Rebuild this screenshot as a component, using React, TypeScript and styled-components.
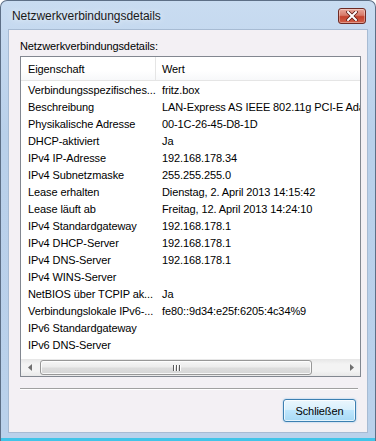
import React from "react";
import styled, { createGlobalStyle } from "styled-components";

const Global = createGlobalStyle`
  html, body { margin: 0; padding: 0; }
  body { width: 376px; height: 441px; overflow: hidden; font-family: "Liberation Sans", Arial, sans-serif; }
`;

const Window = styled.div`
  width: 376px;
  height: 441px;
  box-sizing: border-box;
  display: flex;
  flex-direction: column;
  background: linear-gradient(180deg, #c9dcf1 0%, #b9d0ea 30%, #bad1eb 100%);
  border: 1px solid #5d6f86;
  border-bottom: none;
  border-radius: 7px 7px 0 0;
  overflow: hidden;
`;

const TitleBar = styled.div`
  height: 28px;
  flex: none;
  display: flex;
  align-items: center;
  justify-content: space-between;
  padding: 0 9px 0 11px;
`;

const Title = styled.div`
  font-size: 12px;
  letter-spacing: -0.05px;
  color: #1a1a1a;
  text-shadow: 0 0 6px rgba(255, 255, 255, 0.9);
  margin-top: 2px;
`;

const CloseButton = styled.div`
  width: 28px;
  height: 16px;
  margin-top: 2px;
  box-sizing: border-box;
  border: 1px solid #6e2a24;
  border-radius: 3px;
  background: linear-gradient(180deg, #e9a99c 0%, #d77a69 45%, #c4412c 55%, #d2624b 100%);
  display: flex;
  align-items: center;
  justify-content: center;
  box-shadow: inset 0 0 0 1px rgba(255, 255, 255, 0.35);
`;

const Client = styled.div`
  flex: 1;
  margin: 0 7px 5px 7px;
  background: #f3f0f4;
  border: 1px solid #a7bbd3;
  display: flex;
  flex-direction: column;
  padding: 9px 8px 10px 11px;
  box-sizing: border-box;
  min-height: 0;
  font-size: 11px;
  letter-spacing: -0.1px;
`;

const Label = styled.div`
  color: #000;
  line-height: 15px;
  margin-bottom: 2px;
`;

const ListBox = styled.div`
  width: 341px;
  height: 323px;
  box-sizing: border-box;
  border: 1px solid #828790;
  background: #fff;
  display: flex;
  flex-direction: column;
  overflow: hidden;
`;

const Header = styled.div`
  height: 23px;
  flex: none;
  display: flex;
  border-bottom: 1px solid #e5e5e5;
  background: linear-gradient(180deg, #ffffff 0%, #ffffff 60%, #f7f8fa 100%);
`;

const HeaderCell = styled.div<{ $w: number }>`
  width: ${(p) => p.$w}px;
  flex: none;
  box-sizing: border-box;
  padding-left: ${(p) => (p.$w > 150 ? 6 : 7)}px;
  display: flex;
  align-items: center;
  border-right: 1px solid #e5e5e5;
`;

const Rows = styled.div`
  flex: 1;
  display: flex;
  flex-direction: column;
`;

const Row = styled.div`
  height: 17px;
  display: flex;
  align-items: center;
  white-space: nowrap;
`;

const Cell = styled.div<{ $w: number; $pad: number }>`
  width: ${(p) => p.$w}px;
  flex: none;
  box-sizing: border-box;
  padding-left: ${(p) => p.$pad}px;
  overflow: hidden;
  white-space: nowrap;
`;

const ScrollBar = styled.div`
  height: 17px;
  flex: none;
  display: flex;
  align-items: center;
  background: linear-gradient(180deg, #e6e6e6 0%, #f3f3f3 30%, #f3f3f3 70%, #e8e8e8 100%);
`;

const Arrow = styled.div`
  width: 17px;
  height: 17px;
  flex: none;
  display: flex;
  align-items: center;
  justify-content: center;
`;

const Thumb = styled.div<{ $hidden?: boolean }>`
  flex: ${(p) => (p.$hidden ? "0 0 25px" : "1")};
  visibility: ${(p) => (p.$hidden ? "hidden" : "visible")};
  height: 15px;
  margin: 0 2px;
  box-sizing: border-box;
  border: 1px solid #979797;
  border-radius: 3px;
  background: linear-gradient(180deg, #f6f6f6 0%, #ececec 45%, #dcdcdc 55%, #d6d6d6 100%);
  box-shadow: inset 0 0 0 1px rgba(255, 255, 255, 0.8);
  display: flex;
  align-items: center;
  justify-content: center;
`;

const Grip = styled.div`
  display: flex;
  gap: 2px;
`;

const GripLine = styled.div`
  width: 1px;
  height: 6px;
  background: #5a5a5a;
  box-shadow: 1px 0 0 #fff;
`;

const Separator = styled.div`
  width: 338px;
  height: 0;
  border-top: 1px solid #a0a0a0;
  border-bottom: 1px solid #ffffff;
  margin-top: 11px;
`;

const Footer = styled.div`
  display: flex;
  justify-content: flex-end;
  margin-top: 9px;
  padding-right: 3px;
`;

const Button = styled.div`
  width: 73px;
  height: 23px;
  box-sizing: border-box;
  border: 1px solid #3c7fb1;
  border-radius: 3px;
  background: linear-gradient(180deg, #eaf6fd 0%, #d9f0fc 45%, #bee6fd 50%, #a7d9f5 100%);
  box-shadow: inset 0 0 0 1px rgba(255, 255, 255, 0.7), 0 0 2px rgba(64, 160, 230, 0.6);
  display: flex;
  align-items: center;
  justify-content: center;
`;

const BottomStripe = styled.div`
  height: 3px;
  flex: none;
  background: #41c4e8;
`;

const rows: [string, string][] = [
  ["Verbindungsspezifisches...", "fritz.box"],
  ["Beschreibung", "LAN-Express AS IEEE 802.11g PCI-E Adapter"],
  ["Physikalische Adresse", "00-1C-26-45-D8-1D"],
  ["DHCP-aktiviert", "Ja"],
  ["IPv4 IP-Adresse", "192.168.178.34"],
  ["IPv4 Subnetzmaske", "255.255.255.0"],
  ["Lease erhalten", "Dienstag, 2. April 2013 14:15:42"],
  ["Lease läuft ab", "Freitag, 12. April 2013 14:24:10"],
  ["IPv4 Standardgateway", "192.168.178.1"],
  ["IPv4 DHCP-Server", "192.168.178.1"],
  ["IPv4 DNS-Server", "192.168.178.1"],
  ["IPv4 WINS-Server", ""],
  ["NetBIOS über TCPIP ak...", "Ja"],
  ["Verbindungslokale IPv6-...", "fe80::9d34:e25f:6205:4c34%9"],
  ["IPv6 Standardgateway", ""],
  ["IPv6 DNS-Server", ""],
];

export default function App() {
  return (
    <>
      <Global />
      <Window>
        <TitleBar>
          <Title>Netzwerkverbindungsdetails</Title>
          <CloseButton>
            <svg width="12" height="10" viewBox="0 0 12 10">
              <path d="M2 1 L10 9 M10 1 L2 9" stroke="#5a1a14" strokeWidth="3.6" strokeLinecap="square" />
              <path d="M2 1 L10 9 M10 1 L2 9" stroke="#ffffff" strokeWidth="2" strokeLinecap="square" />
            </svg>
          </CloseButton>
        </TitleBar>
        <Client>
          <Label>Netzwerkverbindungsdetails:</Label>
          <ListBox>
            <Header>
              <HeaderCell $w={135}>Eigenschaft</HeaderCell>
              <HeaderCell $w={205}>Wert</HeaderCell>
            </Header>
            <Rows>
              {rows.map(([k, v]) => (
                <Row key={k}>
                  <Cell $w={135} $pad={7}>{k}</Cell>
                  <Cell $w={204} $pad={6}>{v}</Cell>
                </Row>
              ))}
            </Rows>
            <ScrollBar>
              <Arrow>
                <svg width="4" height="7" viewBox="0 0 4 7">
                  <path d="M4 0 L0 3.5 L4 7 Z" fill="#707070" />
                </svg>
              </Arrow>
              <Thumb>
                <Grip>
                  <GripLine />
                  <GripLine />
                  <GripLine />
                </Grip>
              </Thumb>
              <Thumb $hidden />
              <Arrow>
                <svg width="4" height="7" viewBox="0 0 4 7">
                  <path d="M0 0 L4 3.5 L0 7 Z" fill="#707070" />
                </svg>
              </Arrow>
            </ScrollBar>
          </ListBox>
          <Separator />
          <Footer>
            <Button>Schließen</Button>
          </Footer>
        </Client>
        <BottomStripe />
      </Window>
    </>
  );
}
